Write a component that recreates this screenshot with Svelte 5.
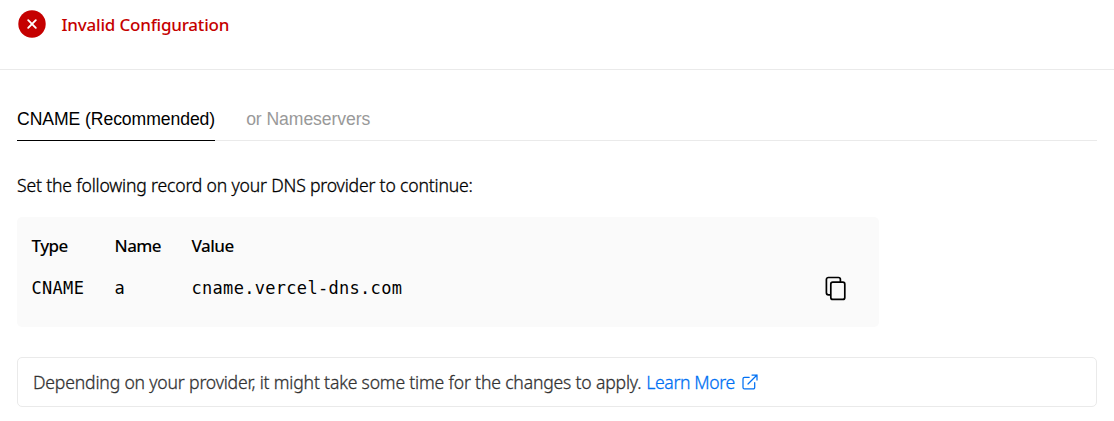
<script>
  const tabs = ['CNAME (Recommended)', 'or Nameservers'];
  let active = $state(0);
  const columns = [
    { label: 'Type', value: 'CNAME' },
    { label: 'Name', value: 'a' },
    { label: 'Value', value: 'cname.vercel-dns.com' }
  ];
</script>

<main>
  <header>
    <svg class="status" width="28" height="28" viewBox="0 0 28 28" aria-hidden="true">
      <circle cx="14" cy="14" r="13.7" fill="#c50000" />
      <path d="M10.2 10.2l7.6 7.6M17.8 10.2l-7.6 7.6" stroke="#fff" stroke-width="1.9" stroke-linecap="round" />
    </svg>
    <span class="title">Invalid Configuration</span>
  </header>

  <section>
    <nav>
      {#each tabs as tab, i}
        <button class:active={active === i} onclick={() => (active = i)}>{tab}</button>
      {/each}
    </nav>

    <p class="intro"><span>Set the following record on your DNS provider to continue:</span></p>

    <div class="record">
      {#each columns as c}
        <div class="col {c.label.toLowerCase()}">
          <div class="label"><span>{c.label}</span></div>
          <div class="mono">{c.value}</div>
        </div>
      {/each}
      <button class="copy" aria-label="Copy">
        <svg width="24" height="28" viewBox="0 0 24 28" fill="none" stroke="#000" stroke-width="1.7">
          <path d="M7.2 20.8H5.4a2 2 0 0 1-2-2V5.5a2 2 0 0 1 2-2h10a2 2 0 0 1 2 2v2.4" />
          <rect x="7.8" y="8.2" width="14" height="17.2" rx="2" />
        </svg>
      </button>
    </div>

    <div class="note">
      <span class="text">Depending on your provider, it might take some time for the changes to apply.</span>
      <a href="#learn"><span>Learn More</span>
        <svg width="16" height="16" viewBox="0 0 16 16" fill="none" stroke="currentColor" stroke-width="1.25" stroke-linecap="round" stroke-linejoin="round">
          <path d="M12.7 8.7v4.7a1.5 1.5 0 0 1-1.5 1.5H2.5A1.5 1.5 0 0 1 1 13.4V4.8a1.5 1.5 0 0 1 1.5-1.5h4.7M10 1h5v5M6 10l9-9" />
        </svg>
      </a>
    </div>
  </section>
</main>

<style>
  :global(body) { background: #fff; }
  main {
    box-sizing: border-box;
    height: 421px;
    overflow: hidden;
    font: 300 17.6px/24px "Noto Sans", sans-serif;
    color: #000;
  }
  header {
    box-sizing: border-box;
    height: 70px;
    padding: 10px 18px;
    display: flex;
    align-items: flex-start;
    border-bottom: 1px solid #eaeaea;
  }
  .title {
    margin: 3px 0 0 15.5px;
    color: #c50000;
    font-size: 17px;
    font-weight: 500;
    letter-spacing: -0.2px;
    white-space: nowrap;
  }
  section { padding: 27px 17px 0; }
  button { border: 0; background: none; padding: 0; margin: 0; }
  nav {
    display: flex;
    gap: 31px;
    box-sizing: border-box;
    height: 44px;
    box-shadow: inset 0 -1px #eaeaea;
  }
  nav button {
    box-sizing: border-box;
    height: 44px;
    font: 17.6px/44px "Liberation Sans", sans-serif;
    letter-spacing: -0.07px;
    color: #999;
    white-space: nowrap;
  }
  nav button.active { color: #000; border-bottom: 1px solid #000; }
  .intro { margin: 32px 0 20px; height: 24px; white-space: nowrap; letter-spacing: -0.18px; -webkit-text-stroke: 0.3px; }
  .record {
    box-sizing: border-box;
    width: 862px;
    height: 110px;
    padding: 17px 32px 0 14.5px;
    display: flex;
    border-radius: 5px;
    background: #fafafa;
  }
  .col { white-space: nowrap; }
  .type { width: 83px; }
  .name { width: 77px; }
  .label { font-size: 17px; font-weight: 500; height: 24px; letter-spacing: -0.55px; }
  .mono {
    margin-top: 18px;
    font: 17px/24px "DejaVu Sans Mono", monospace;
    letter-spacing: 0.3px;
  }
  .copy { margin: 40px 0 0 auto; height: 28px; width: 24px; }
  svg { display: block; flex: none; }
  .note {
    box-sizing: border-box;
    margin-top: 30px;
    height: 50px;
    padding: 0 15px;
    display: flex;
    align-items: center;
    border: 1px solid #eaeaea;
    border-radius: 5px;
    color: #333;
    white-space: nowrap;
    letter-spacing: -0.18px;
  }
  .note span { -webkit-text-stroke: 0.3px; }
  a { display: flex; align-items: center; gap: 7px; margin-left: 5px; color: #0070f3; text-decoration: none; letter-spacing: -0.38px; }
</style>
